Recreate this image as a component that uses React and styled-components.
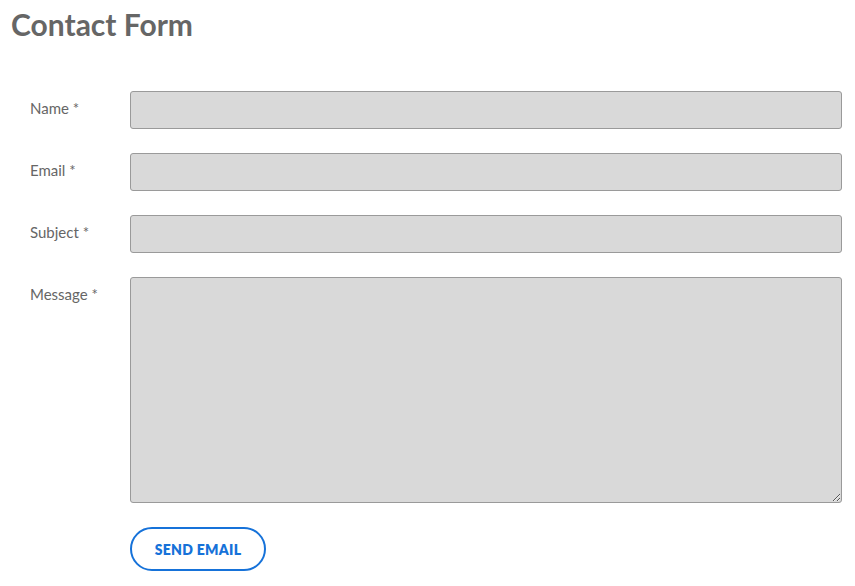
import React from 'react';
import styled, { createGlobalStyle } from 'styled-components';

const GlobalStyle = createGlobalStyle`
  body {
    margin: 0;
    background: #ffffff;
    font-family: Lato, "Open Sans", sans-serif;
  }
`;

const Page = styled.div`
  padding: 6px 13px 14px 11px;
`;

const Title = styled.h1`
  margin: 0 0 49px;
  font-size: 30px;
  line-height: 36px;
  font-weight: 700;
  color: #666666;
`;

const Form = styled.form`
  display: grid;
  grid-template-columns: 100px 1fr;
  row-gap: 24px;
  padding-left: 19px;
`;

const Label = styled.label`
  font-size: 15px;
  color: #666666;
  padding-top: 8px;
  line-height: 18px;
`;

const fieldStyles = `
  box-sizing: border-box;
  width: 100%;
  margin: 0;
  border: 1px solid #9a9a9a;
  border-radius: 3px;
  background: #d9d9d9;
  font-family: inherit;
  font-size: 15px;
  padding: 8px 10px;
`;

const Input = styled.input`
  ${fieldStyles}
  height: 38px;
  display: block;
`;

const TextArea = styled.textarea`
  ${fieldStyles}
  height: 226px;
  display: block;
  resize: vertical;
`;

const Actions = styled.div`
  grid-column: 2;
`;

const SendButton = styled.button`
  height: 44px;
  width: 136px;
  border: 2px solid #1672d9;
  border-radius: 22px;
  background: #ffffff;
  color: #1672d9;
  font-family: inherit;
  font-weight: 800;
  font-size: 14px;
  letter-spacing: 0.3px;
  cursor: pointer;
`;

const fields = [
  { id: 'name', label: 'Name *' },
  { id: 'email', label: 'Email *', type: 'email' },
  { id: 'subject', label: 'Subject *' },
];

const App = () => (
  <Page>
    <GlobalStyle />
    <Title>Contact Form</Title>
    <Form onSubmit={e => e.preventDefault()}>
      {fields.map(f => (
        <React.Fragment key={f.id}>
          <Label htmlFor={f.id}>{f.label}</Label>
          <Input id={f.id} type={f.type || 'text'} />
        </React.Fragment>
      ))}
      <Label htmlFor="message">Message *</Label>
      <TextArea id="message" />
      <Actions>
        <SendButton type="submit">SEND EMAIL</SendButton>
      </Actions>
    </Form>
  </Page>
);

export default App;
